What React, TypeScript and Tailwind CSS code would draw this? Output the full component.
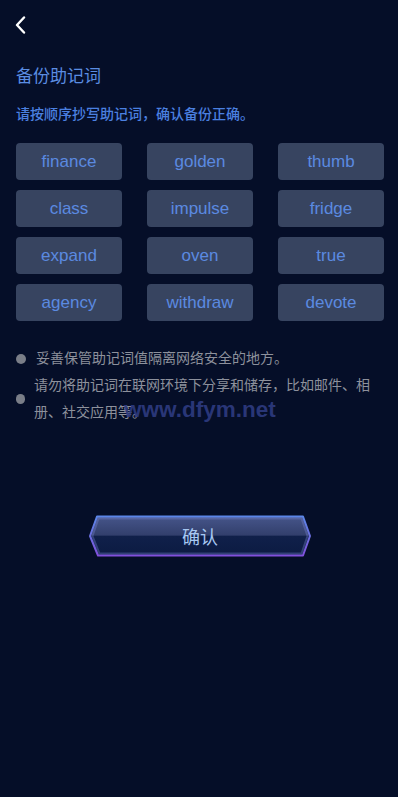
import React from "react";

const words = [
  "finance", "golden", "thumb",
  "class", "impulse", "fridge",
  "expand", "oven", "true",
  "agency", "withdraw", "devote",
];

export default function App() {
  return (
    <div
      className="relative w-full h-[797px] bg-[#050e28] overflow-hidden"
      style={{ fontFamily: '"Liberation Sans", "Noto Sans CJK SC", sans-serif' }}
    >
      <div className="h-[50px] flex items-center px-[15px]">
        <svg width="11" height="18" viewBox="0 0 11 18">
          <path d="M9 1.5 L2 9 L9 16.5" fill="none" stroke="#ffffff" strokeWidth="2.4" strokeLinecap="round" strokeLinejoin="round" />
        </svg>
      </div>

      <div className="px-[16px]">
        <div className="mt-[15px] text-[17px] leading-[24px] text-[#5b8de2]">备份助记词</div>
        <div className="mt-[15px] text-[14px] leading-[20px] text-[#4b80e0] font-medium">请按顺序抄写助记词，确认备份正确。</div>

        <div className="mt-[19px] grid grid-cols-[106px_106px_106px] gap-x-[25px] gap-y-[10px]">
          {words.map((w) => (
            <div
              key={w}
              className="h-[37px] rounded-[4px] bg-[#374460] flex items-center justify-center text-[17px] text-[#5b8ae0]"
            >
              {w}
            </div>
          ))}
        </div>

        <div className="mt-[24px] text-[14px] leading-[27px] text-[#8d919c]">
          <div className="flex items-center">
            <div className="w-[10px] h-[10px] rounded-full bg-[#7a7e88] shrink-0" />
            <div className="ml-[10px]">妥善保管助记词值隔离网络安全的地方。</div>
          </div>
          <div className="flex items-center">
            <div className="w-[9px] h-[10px] rounded-full bg-[#7a7e88] shrink-0" />
            <div className="ml-[9px]">请勿将助记词在联网环境下分享和储存，比如邮件、相册、社交应用等。</div>
          </div>
        </div>
      </div>

      <div
        className="absolute left-[124px] top-[396px] text-[22.5px] leading-[28px] font-bold text-[#2e3b80] opacity-90"
        style={{ fontFamily: '"Liberation Sans", Arial, sans-serif' }}
      >
        www.dfym.net
      </div>

      <div className="mt-[89px] flex justify-center">
        <div className="relative w-[222px] h-[42px] flex items-center justify-center ml-[2px]">
          <svg className="absolute inset-0" width="222" height="42" viewBox="0 0 222 42">
            <defs>
              <linearGradient id="fillG" x1="0" y1="0" x2="0" y2="1">
                <stop offset="0" stopColor="#46558a" />
                <stop offset="0.48" stopColor="#323f6c" />
                <stop offset="0.5" stopColor="#10204a" />
                <stop offset="1" stopColor="#0c1b42" />
              </linearGradient>
              <linearGradient id="strokeG" x1="0" y1="0" x2="0" y2="1">
                <stop offset="0" stopColor="#5b86e8" />
                <stop offset="0.5" stopColor="#6a6ee0" />
                <stop offset="1" stopColor="#8150dc" />
              </linearGradient>
            </defs>
            <polygon
              points="8,1.5 214,1.5 221,21 214,40.5 9,40.5 1,21"
              fill="url(#fillG)"
              stroke="url(#strokeG)"
              strokeWidth="2"
              strokeLinejoin="round"
            />
            <polygon
              points="9.5,3.5 212.5,3.5 218.5,21 212.5,38.5 10.5,38.5 3.5,21"
              fill="none"
              stroke="#7a86d8"
              strokeOpacity="0.35"
              strokeWidth="2"
            />
          </svg>
          <span
            className="relative text-[18px] text-[#a7c8f2]"
            style={{ fontFamily: '"Noto Sans CJK SC", sans-serif' }}
          >
            确认
          </span>
        </div>
      </div>
    </div>
  );
}
